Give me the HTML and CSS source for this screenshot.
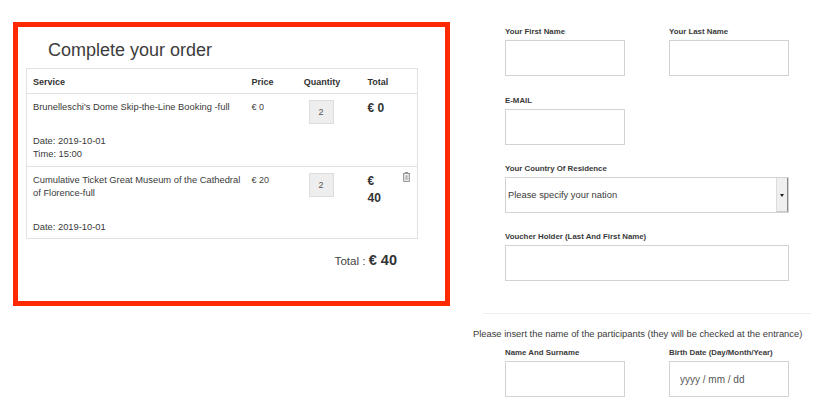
FILE: index.html
```html
<!DOCTYPE html>
<html lang="en">
<head>
<meta charset="utf-8">
<title>Complete your order</title>
<link rel="stylesheet" href="styles.css">
</head>
<body>
<main class="page">
  <section class="order">
    <h1 class="order-title">Complete your order</h1>
    <table class="cart">
      <colgroup>
        <col class="col-service"><col class="col-price"><col class="col-qty"><col class="col-total"><col class="col-del">
      </colgroup>
      <thead>
        <tr><th>Service</th><th>Price</th><th class="center">Quantity</th><th>Total</th><th></th></tr>
      </thead>
      <tbody>
        <tr class="row-first">
          <td class="service">
            <p class="service-name">Brunelleschi's Dome Skip-the-Line Booking -full</p>
            <p class="service-meta">Date: 2019-10-01<br>Time: 15:00</p>
          </td>
          <td class="price">€ 0</td>
          <td class="center"><span class="qty">2</span></td>
          <td class="line-total">€ 0</td>
          <td></td>
        </tr>
        <tr class="row-second">
          <td class="service">
            <p class="service-name">Cumulative Ticket Great Museum of the Cathedral of Florence-full</p>
            <p class="service-meta">Date: 2019-10-01</p>
          </td>
          <td class="price">€ 20</td>
          <td class="center"><span class="qty">2</span></td>
          <td class="line-total">€ 40</td>
          <td class="del">
            <svg class="trash" viewBox="0 0 10 12" width="9" height="10" aria-label="Remove">
              <path d="M3.5 1.5V.6h3v.9M.6 1.9h8.8M1.6 2.4v8.9h6.8V2.4" fill="none" stroke="#777" stroke-width="1"/>
              <path d="M3.5 3.8v6M5 3.8v6M6.5 3.8v6" stroke="#999" stroke-width=".8"/>
            </svg>
          </td>
        </tr>
      </tbody>
    </table>
    <p class="grand-total">Total : <strong>€ 40</strong></p>
  </section>

  <form class="details">
    <div class="pair pair-first">
      <div class="field"><label>Your First Name</label><input class="box" type="text"></div>
      <div class="field"><label>Your Last Name</label><input class="box" type="text"></div>
    </div>
    <div class="field field-email"><label>E-MAIL</label><input class="box" type="text"></div>
    <div class="field field-country">
      <label>Your Country Of Residence</label>
      <div class="select"><span class="select-text">Please specify your nation</span><span class="select-btn"></span></div>
    </div>
    <div class="field field-voucher"><label>Voucher Holder (Last And First Name)</label><input class="box wide" type="text"></div>
    <hr class="rule">
    <p class="note">Please insert the name of the participants (they will be checked at the entrance)</p>
    <div class="pair">
      <div class="field"><label>Name And Surname</label><input class="box" type="text"></div>
      <div class="field"><label>Birth Date (Day/Month/Year)</label><input class="box date" type="text" placeholder="yyyy / mm / dd"></div>
    </div>
  </form>
</main>
</body>
</html>
```
FILE: styles.css
```css
* { box-sizing: border-box; }
html, body { margin: 0; padding: 0; background: #fff; }
body {
  font-family: "Liberation Sans", Arial, sans-serif;
  color: #333;
  overflow: hidden;
}
.page {
  display: flex;
  align-items: flex-start;
  padding: 22px 0 0 13px;
}
.order {
  width: 437px;
  height: 284px;
  flex: none;
  border: 5px solid #ff2a00;
  padding: 0 8px;
}
.order-title {
  margin: 0;
  padding: 10px 0 0 22px;
  height: 41px;
  font-size: 18px;
  line-height: 26px;
  font-weight: 300;
  color: #3c3c3c;
}
.cart {
  width: 391px;
  border-collapse: collapse;
  table-layout: fixed;
  border: 1px solid #e2e2e2;
  font-size: 10px;
}
.col-service { width: 219px; }
.col-price { width: 45px; }
.col-qty { width: 71px; }
.col-total { width: 30px; }
.col-del { width: 26px; }
.cart th {
  height: 25px;
  padding: 1px 6px 0;
  text-align: left;
  font-size: 9px;
  font-weight: 700;
  border-bottom: 1px solid #e2e2e2;
}
.cart th.center { text-align: center; padding-right: 14px; padding-left: 6px; }
.cart td {
  padding: 7px 6px 0;
  vertical-align: top;
  line-height: 13px;
}
.cart td.center { text-align: center; padding-right: 16px; padding-left: 6px; }
.cart td.service { padding-right: 3px; }
.row-first td { height: 73px; border-bottom: 1px solid #e2e2e2; }
.row-second td { height: 72px; }
.service-name {
  margin: 0;
  font-size: 9.35px;
  line-height: 13px;
  color: #3a3a3a;
}
.service-meta {
  margin: 21px 0 0;
  font-size: 9.35px;
  line-height: 13px;
  color: #3a3a3a;
}
.cart td.price { font-size: 9px; color: #444; }
.qty {
  display: inline-block;
  width: 25px;
  height: 24px;
  margin-top: -1px;
  background: #eee;
  border: 1px solid #ddd;
  font-size: 9px;
  line-height: 23px;
  text-align: center;
  color: #555;
}
.cart td.line-total {
  padding: 6px 6px 0;
  font-size: 12px;
  line-height: 17px;
  font-weight: 700;
  color: #333;
}
.cart td.del { padding: 5px 0 0 10px; }
.trash { display: block; }
.grand-total {
  margin: 11px 40px 0 0;
  text-align: right;
  font-size: 11.6px;
  line-height: 20px;
  color: #444;
}
.grand-total strong {
  font-size: 14.5px;
  color: #333;
}
.details {
  width: 284px;
  margin-left: 55px;
  flex: none;
}
.pair {
  display: flex;
  gap: 44px;
}
.field label {
  display: block;
  height: 18px;
  padding-top: 4px;
  font-size: 7.85px;
  line-height: 12px;
  font-weight: 700;
  color: #3a3a3a;
  white-space: nowrap;
}
.pair .field { width: 120px; }
.box {
  display: block;
  width: 120px;
  height: 36px;
  padding: 0 10px;
  margin: 0;
  border: 1px solid #d2d2d2;
  background: #fff;
  border-radius: 0;
  outline: 0;
  font: 10px "Liberation Sans", Arial, sans-serif;
}
.box.wide { width: 284px; }
.box.date::placeholder { color: #555; opacity: 1; }
.field-email { margin-top: 15px; }
.field-country { margin-top: 14px; }
.select {
  display: flex;
  height: 36px;
  border: 1px solid #d2d2d2;
  align-items: stretch;
}
.select-text {
  flex: 1;
  padding-left: 2px;
  font-size: 9.35px;
  line-height: 34px;
  color: #3a3a3a;
}
.select-btn {
  position: relative;
  width: 12px;
  background: #efefef;
  border-left: 1px solid #ddd;
  border-right: 1px solid #888;
  border-bottom: 1px solid #ccc;
}
.select-btn::after {
  content: "";
  position: absolute;
  left: 3px;
  top: 16px;
  border: 2.5px solid transparent;
  border-top: 3px solid #222;
  border-bottom: 0;
}
.field-voucher { margin-top: 14px; }
.rule {
  margin: 32px -22px 0 -22px;
  border: 0;
  border-top: 1px solid #eee;
}
.note {
  margin: 14px -20px 0 -32px;
  font-size: 9.35px;
  line-height: 13px;
  color: #3a3a3a;
  white-space: nowrap;
}
.note + .pair { margin-top: 2px; }
```
